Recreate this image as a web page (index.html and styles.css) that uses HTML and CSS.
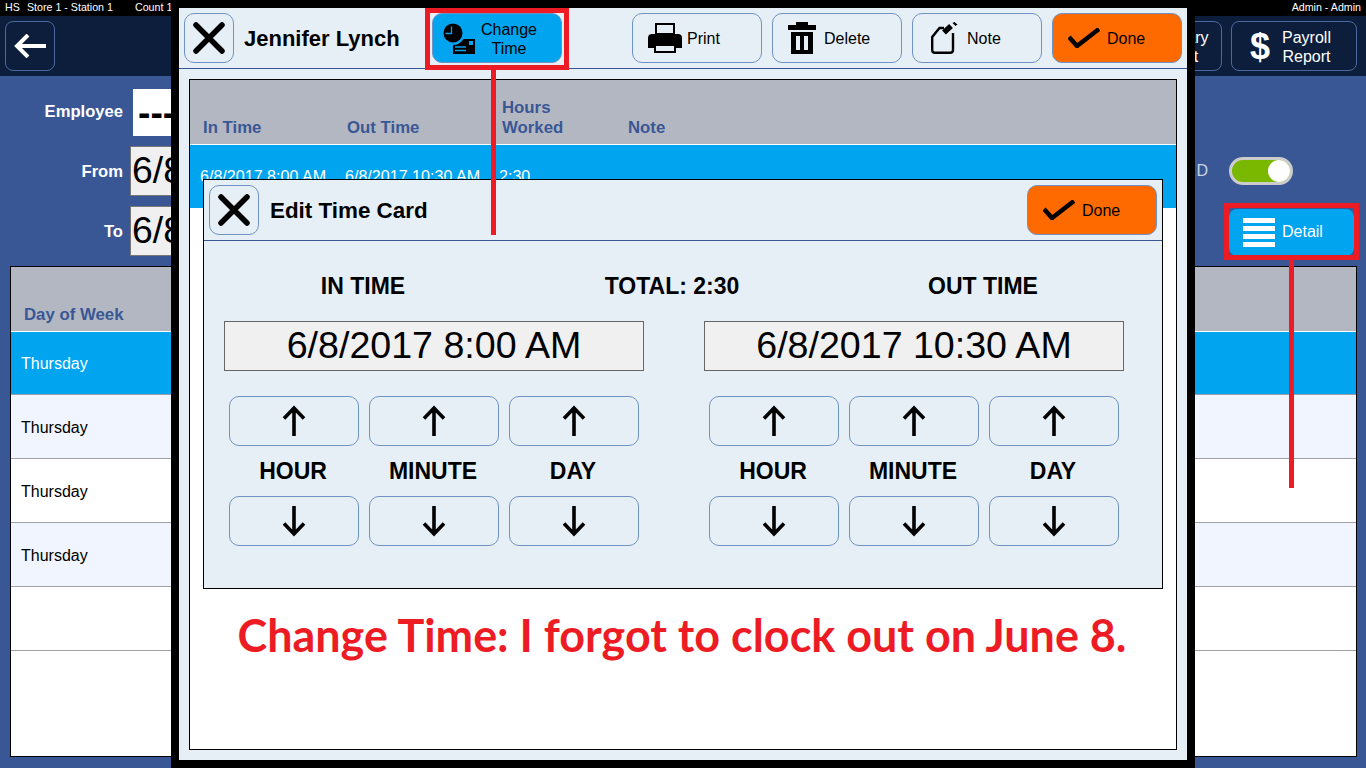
FILE: index.html
```html
<!DOCTYPE html>
<html lang="en">
<head>
    <meta charset="UTF-8">
    <meta name="viewport" content="width=device-width, initial-scale=1.0">
    <title>Time Cards - Edit Time Card</title>
    <link rel="stylesheet" href="styles.css">
</head>
<body>
    <svg class="sprite" xmlns="http://www.w3.org/2000/svg">
        <symbol id="icon-close" viewBox="0 0 32 32">
            <path d="M3 3L29 29M29 3L3 29" fill="none" stroke="#000" stroke-width="5.5" stroke-linecap="round"/>
        </symbol>
        <symbol id="icon-check" viewBox="0 0 32 20">
            <path d="M1 9L9 18L31 1" fill="none" stroke="#000" stroke-width="4.5"/>
        </symbol>
        <symbol id="icon-up" viewBox="0 0 24 32">
            <path d="M12 31V3M2 13.5L12 3L22 13.5" fill="none" stroke="#000" stroke-width="3.6"/>
        </symbol>
        <symbol id="icon-down" viewBox="0 0 24 32">
            <path d="M12 1V29M2 18.5L12 29L22 18.5" fill="none" stroke="#000" stroke-width="3.6"/>
        </symbol>
    </svg>

    <div class="topbar">
        <span class="topbar-hs">HS</span>
        <span class="topbar-store">Store 1 - Station 1</span>
        <span>Count 1</span>
        <span class="topbar-user">Admin - Admin</span>
    </div>

    <div class="nav">
        <button class="nav-btn nav-back">
            <svg width="32" height="24" viewBox="0 0 32 24"><path d="M32 12H3M14 1L3 12L14 23" fill="none" stroke="#fff" stroke-width="4"/></svg>
        </button>
        <button class="nav-btn nav-summary">Summary<br>Report</button>
        <button class="nav-btn nav-payroll"><span class="dollar">$</span><span>Payroll<br>Report</span></button>
    </div>

    <div class="filters">
        <div class="filter-row">
            <label class="filter-label employee-label">Employee</label>
            <div class="employee-input">---</div>
        </div>
        <div class="filter-row">
            <label class="filter-label">From</label>
            <div class="date-input">6/8/2017</div>
            <div class="filter-right">
                <span class="toggle-label">D</span>
                <span class="toggle"><span class="knob"></span></span>
            </div>
        </div>
        <div class="filter-row">
            <label class="filter-label">To</label>
            <div class="date-input">6/8/2017</div>
            <div class="filter-right">
                <button class="detail-btn">
                    <svg width="32" height="29" viewBox="0 0 32 29">
                        <path d="M0 0H32V5H0ZM0 8H32V13H0ZM0 16H32V21H0ZM0 24H32V29H0Z" fill="#fff"/>
                    </svg>
                    Detail
                </button>
            </div>
        </div>
    </div>

    <div class="day-table">
        <div class="day-head">Day of Week</div>
        <div class="day-row selected">Thursday</div>
        <div class="day-row alt">Thursday</div>
        <div class="day-row">Thursday</div>
        <div class="day-row alt">Thursday</div>
        <div class="day-row"></div>
    </div>

    <div class="modal">
        <div class="modal-header">
            <button class="btn btn-close"><svg width="32" height="32"><use href="#icon-close"/></svg></button>
            <div class="modal-name">Jennifer Lynch</div>
            <button class="btn btn-blue">
                <svg width="32" height="31" viewBox="0 0 32 31">
                    <path d="M10 16H32V31H10Z" fill="#000"/>
                    <circle cx="10" cy="10" r="12" fill="#00a4ef"/>
                    <circle cx="10" cy="10" r="9.5" fill="#000"/>
                    <path d="M8.5 3.5V10.5H2.5" fill="none" stroke="#00a4ef" stroke-width="1.3"/>
                    <path d="M12 24H23M12 27.5H23" stroke="#00a4ef" stroke-width="1.4"/>
                    <path d="M26 18H30V22H26Z" fill="#00a4ef"/>
                </svg>
                <span class="btn-two-line">Change<br>Time</span>
            </button>
            <button class="btn btn-print">
                <svg width="34" height="30" viewBox="0 0 34 30">
                    <path d="M8 1H26V11H8Z" fill="none" stroke="#000" stroke-width="2"/>
                    <path d="M4 11H30Q34 11 34 15V25H28V21H6V25H0V15Q0 11 4 11Z" fill="#000"/>
                    <path d="M7 22H27V29H7Z" fill="#e6eff6" stroke="#000" stroke-width="2"/>
                </svg>
                Print
            </button>
            <button class="btn">
                <svg width="28" height="32" viewBox="0 0 28 32">
                    <path d="M8 0H20V3H28V8H0V3H8Z" fill="#000"/>
                    <path d="M3 10H25V32H3ZM8 14V28H12V14ZM16 14V28H20V14Z" fill="#000" fill-rule="evenodd"/>
                </svg>
                Delete
            </button>
            <button class="btn btn-note">
                <svg width="27" height="32" viewBox="0 0 27 32">
                    <path d="M13 6H8.5L1.2 15V28Q1.2 30.8 4 30.8H19Q22 30.8 22 28V11" fill="none" stroke="#000" stroke-width="2.4"/>
                    <path d="M13 10.5L20 4" fill="none" stroke="#000" stroke-width="5.5"/>
                    <path d="M21.5 1L23.5 0L26.5 2.5L24.5 4Z" fill="#000"/>
                </svg>
                Note
            </button>
            <button class="btn btn-orange"><svg width="32" height="20"><use href="#icon-check"/></svg>Done</button>
        </div>

        <div class="card-table">
            <div class="card-head">
                <span>In Time</span>
                <span>Out Time</span>
                <span>Hours<br>Worked</span>
                <span>Note</span>
            </div>
            <div class="card-row">
                <span>6/8/2017 8:00 AM</span>
                <span>6/8/2017 10:30 AM</span>
                <span>2:30</span>
            </div>
        </div>

        <div class="dialog">
            <div class="dialog-header">
                <button class="btn btn-close"><svg width="32" height="32"><use href="#icon-close"/></svg></button>
                <div class="dialog-title">Edit Time Card</div>
                <button class="btn btn-orange btn-right"><svg width="32" height="20"><use href="#icon-check"/></svg>Done</button>
            </div>
            <div class="dialog-body">
                <div class="totals">
                    <div class="total-in">IN TIME</div>
                    <div class="total-mid">TOTAL: 2:30</div>
                    <div class="total-out">OUT TIME</div>
                </div>
                <div class="editors">
                    <div class="editor">
                        <div class="time-field">6/8/2017 8:00 AM</div>
                        <div class="stepper">
                            <button class="step"><svg width="24" height="32"><use href="#icon-up"/></svg></button>
                            <button class="step"><svg width="24" height="32"><use href="#icon-up"/></svg></button>
                            <button class="step"><svg width="24" height="32"><use href="#icon-up"/></svg></button>
                            <div class="step-label">HOUR</div>
                            <div class="step-label">MINUTE</div>
                            <div class="step-label">DAY</div>
                            <button class="step"><svg width="24" height="32"><use href="#icon-down"/></svg></button>
                            <button class="step"><svg width="24" height="32"><use href="#icon-down"/></svg></button>
                            <button class="step"><svg width="24" height="32"><use href="#icon-down"/></svg></button>
                        </div>
                    </div>
                    <div class="editor">
                        <div class="time-field">6/8/2017 10:30 AM</div>
                        <div class="stepper">
                            <button class="step"><svg width="24" height="32"><use href="#icon-up"/></svg></button>
                            <button class="step"><svg width="24" height="32"><use href="#icon-up"/></svg></button>
                            <button class="step"><svg width="24" height="32"><use href="#icon-up"/></svg></button>
                            <div class="step-label">HOUR</div>
                            <div class="step-label">MINUTE</div>
                            <div class="step-label">DAY</div>
                            <button class="step"><svg width="24" height="32"><use href="#icon-down"/></svg></button>
                            <button class="step"><svg width="24" height="32"><use href="#icon-down"/></svg></button>
                            <button class="step"><svg width="24" height="32"><use href="#icon-down"/></svg></button>
                        </div>
                    </div>
                </div>
            </div>
        </div>

        <div class="caption">Change Time: I forgot to clock out on June 8.</div>
    </div>

    <!-- red tutorial marks -->
    <div class="mark mark-change"></div>
    <div class="mark-line line-change"></div>
    <div class="mark mark-detail"></div>
    <div class="mark-line line-detail"></div>
</body>
</html>
```

FILE: styles.css
```css
html, body {
    height: 100%;
}
body {
    font-family: "Liberation Sans", Arial, sans-serif;
    background-color: #3a5795;
    margin: 0;
    padding: 0;
    color: #000;
    overflow: hidden;
    position: relative;
}
button {
    font-family: inherit;
    padding: 0;
    cursor: pointer;
}
.sprite {
    display: none;
}

/* top strip */
.topbar {
    height: 16px;
    background-color: #000;
    color: white;
    font-size: 10.67px;
    line-height: 14px;
    display: flex;
    padding: 0 5px;
    box-sizing: border-box;
}
.topbar-hs {
    width: 22px;
}
.topbar-store {
    width: 108px;
}
.topbar-user {
    margin-left: auto;
}

/* nav */
.nav {
    height: 60px;
    background-color: #0c1e3b;
    display: flex;
    gap: 9px;
    padding: 5px 9px 5px 5px;
    box-sizing: border-box;
}
.nav-btn {
    height: 50px;
    background-color: transparent;
    border: 1px solid #4a6a9f;
    border-radius: 8px;
    color: white;
    font-size: 16px;
    line-height: 19px;
    display: flex;
    align-items: center;
}
.nav-back {
    width: 50px;
    justify-content: center;
    margin-right: auto;
}
.nav-summary {
    width: 122px;
    padding: 1px 0 0 39px;
    text-align: center;
}
.nav-payroll {
    width: 126px;
    padding: 1px 0 0 18px;
    gap: 12px;
    text-align: center;
}
.dollar {
    font-size: 36px;
    font-weight: bold;
    margin-top: -1px;
}

/* filters */
.filters {
    height: 190px;
    padding-top: 13px;
    box-sizing: border-box;
    display: flex;
    flex-direction: column;
    gap: 10px;
}
.filter-row {
    display: flex;
    align-items: center;
}
.filter-label {
    width: 123px;
    text-align: right;
    color: white;
    font-size: 16.6px;
    font-weight: bold;
    padding-top: 1px;
}
.employee-label {
    padding: 0 0 1px;
}
.employee-input {
    width: 300px;
    height: 47px;
    margin-left: 10px;
    padding-left: 5px;
    box-sizing: border-box;
    background-color: white;
    font-size: 37.33px;
    font-weight: bold;
    line-height: 47px;
}
.date-input {
    width: 300px;
    height: 50px;
    margin-left: 7px;
    padding-left: 1px;
    box-sizing: border-box;
    background-color: #f0f0f0;
    border: 1px solid #777;
    font-size: 37.33px;
    line-height: 46px;
}
.filter-right {
    margin-left: auto;
    display: flex;
    align-items: center;
    gap: 21px;
}
.toggle-label {
    color: #c9d3e6;
    font-size: 16px;
}
.toggle {
    width: 64px;
    height: 28px;
    margin-right: 73px;
    box-sizing: border-box;
    border: 3px solid #ccc;
    border-radius: 14px;
    background-color: #7ab800;
    display: flex;
    justify-content: flex-end;
}
.knob {
    width: 22px;
    height: 22px;
    border-radius: 50%;
    background-color: white;
}
.detail-btn {
    width: 125px;
    height: 47px;
    margin-right: 12px;
    margin-top: 2px;
    background-color: #00a4ef;
    border: none;
    border-radius: 8px;
    color: white;
    font-size: 16px;
    display: flex;
    align-items: center;
    gap: 7px;
    padding-left: 14px;
}

/* background table */
.day-table {
    height: 491px;
    margin: 0 9px 0 10px;
    box-sizing: border-box;
    border: 1px solid #000;
    background-color: white;
}
.day-head {
    height: 65px;
    background-color: #b3b7c2;
    border-bottom: 1px solid white;
    color: #3a5795;
    font-size: 16.8px;
    font-weight: bold;
    padding: 38px 0 0 13px;
    box-sizing: border-box;
}
.day-row {
    height: 64px;
    box-sizing: border-box;
    border-bottom: 1px solid #a0a0a8;
    padding: 2px 0 0 10px;
    font-size: 16px;
    display: flex;
    align-items: center;
}
.day-row.selected {
    height: 63px;
    background-color: #00a4ef;
    color: white;
}
.day-row.alt {
    background-color: #f0f5ff;
}

/* time card window */
.modal {
    position: absolute;
    left: 171px;
    top: 0;
    width: 1024px;
    height: 768px;
    box-sizing: border-box;
    border: 8px solid #000;
    background-color: #e6eff6;
}
.modal-header {
    height: 61px;
    box-sizing: border-box;
    border-bottom: 1px solid #3a5795;
    padding: 5px;
    display: flex;
    gap: 10px;
}
.modal-name {
    width: 178px;
    font-size: 22px;
    font-weight: bold;
    line-height: 52px;
}
.btn {
    width: 130px;
    height: 50px;
    background-color: transparent;
    border: 1px solid #6f93c4;
    border-radius: 10px;
    font-size: 16px;
    display: flex;
    align-items: center;
    gap: 8px;
    padding: 2px 0 0 15px;
    color: #000;
    flex-shrink: 0;
}
.btn svg {
    margin-top: -2px;
}
.btn-close {
    width: 50px;
    padding: 0;
    justify-content: center;
}
.btn-close svg {
    margin-top: 0;
}
.btn-blue {
    background-color: #00a4ef;
    padding-left: 10px;
    gap: 2px;
    margin-right: 60px;
}
.btn-two-line {
    width: 64px;
    line-height: 19px;
    text-align: center;
}
.btn-print {
    gap: 5px;
}
.btn-note {
    padding-left: 18px;
    gap: 9px;
}
.btn-orange {
    background-color: #ff6a00;
    gap: 7px;
}
.btn-right {
    margin-left: auto;
}

/* rows inside the window */
.card-table {
    margin: 10px 10px 0;
    height: 671px;
    box-sizing: border-box;
    border: 1px solid #000;
    background-color: white;
}
.card-head {
    height: 65px;
    box-sizing: border-box;
    background-color: #b3b7c2;
    border-bottom: 1px solid white;
    color: #3a5795;
    font-size: 16.8px;
    font-weight: bold;
    line-height: 20px;
    padding: 0 0 6px 13px;
    display: grid;
    grid-template-columns: 144px 155px 126px 1fr;
    align-items: end;
}
.card-row {
    height: 63px;
    background-color: #00a4ef;
    color: white;
    font-size: 16.1px;
    padding-left: 10px;
    display: grid;
    grid-template-columns: 145px 154px 1fr;
    align-items: center;
}

/* edit dialog */
.dialog {
    position: absolute;
    left: 24px;
    top: 171px;
    width: 960px;
    height: 410px;
    box-sizing: border-box;
    border: 1px solid #000;
    background-color: #e6eff6;
}
.dialog-header {
    height: 61px;
    box-sizing: border-box;
    border-bottom: 1px solid #3a5795;
    padding: 5px;
    display: flex;
    gap: 11px;
}
.dialog-title {
    font-size: 22.4px;
    font-weight: bold;
    line-height: 52px;
}
.dialog-body {
    padding-top: 31px;
}
.totals {
    display: flex;
    font-size: 23px;
    font-weight: bold;
    line-height: 28px;
    text-align: center;
}
.total-in {
    width: 318px;
}
.total-mid {
    width: 300px;
}
.total-out {
    width: 322px;
}
.editors {
    display: flex;
    gap: 60px;
    padding: 21px 0 0 20px;
}
.editor {
    width: 420px;
}
.time-field {
    height: 50px;
    box-sizing: border-box;
    background-color: #f0f0f0;
    border: 1px solid #666;
    font-size: 37.6px;
    line-height: 46px;
    text-align: center;
}
.stepper {
    display: grid;
    grid-template-columns: repeat(3, 130px);
    column-gap: 10px;
    grid-template-rows: 50px 50px 50px;
    padding: 25px 5px 0;
}
.step {
    background-color: transparent;
    border: 1px solid #6f93c4;
    border-radius: 10px;
    display: flex;
    align-items: center;
    justify-content: center;
}
.step-label {
    font-size: 23px;
    font-weight: bold;
    line-height: 50px;
    text-align: center;
    padding-right: 2px;
}

/* tutorial overlay */
.caption {
    position: absolute;
    left: 0;
    right: 0;
    top: 599px;
    padding-right: 2px;
    text-align: center;
    color: #ed1c24;
    font-family: Lato, "Liberation Sans", sans-serif;
    font-size: 44.9px;
    font-weight: bold;
    line-height: 56px;
}
.mark {
    position: absolute;
    box-sizing: border-box;
    border: 5px solid #ed1c24;
}
.mark-line {
    position: absolute;
    width: 5px;
    background-color: #ed1c24;
}
.mark-change {
    left: 425px;
    top: 8px;
    width: 144px;
    height: 62px;
}
.line-change {
    left: 491px;
    top: 70px;
    height: 165px;
}
.mark-detail {
    left: 1224px;
    top: 203px;
    width: 135px;
    height: 57px;
}
.line-detail {
    left: 1289px;
    top: 260px;
    height: 228px;
}
```
